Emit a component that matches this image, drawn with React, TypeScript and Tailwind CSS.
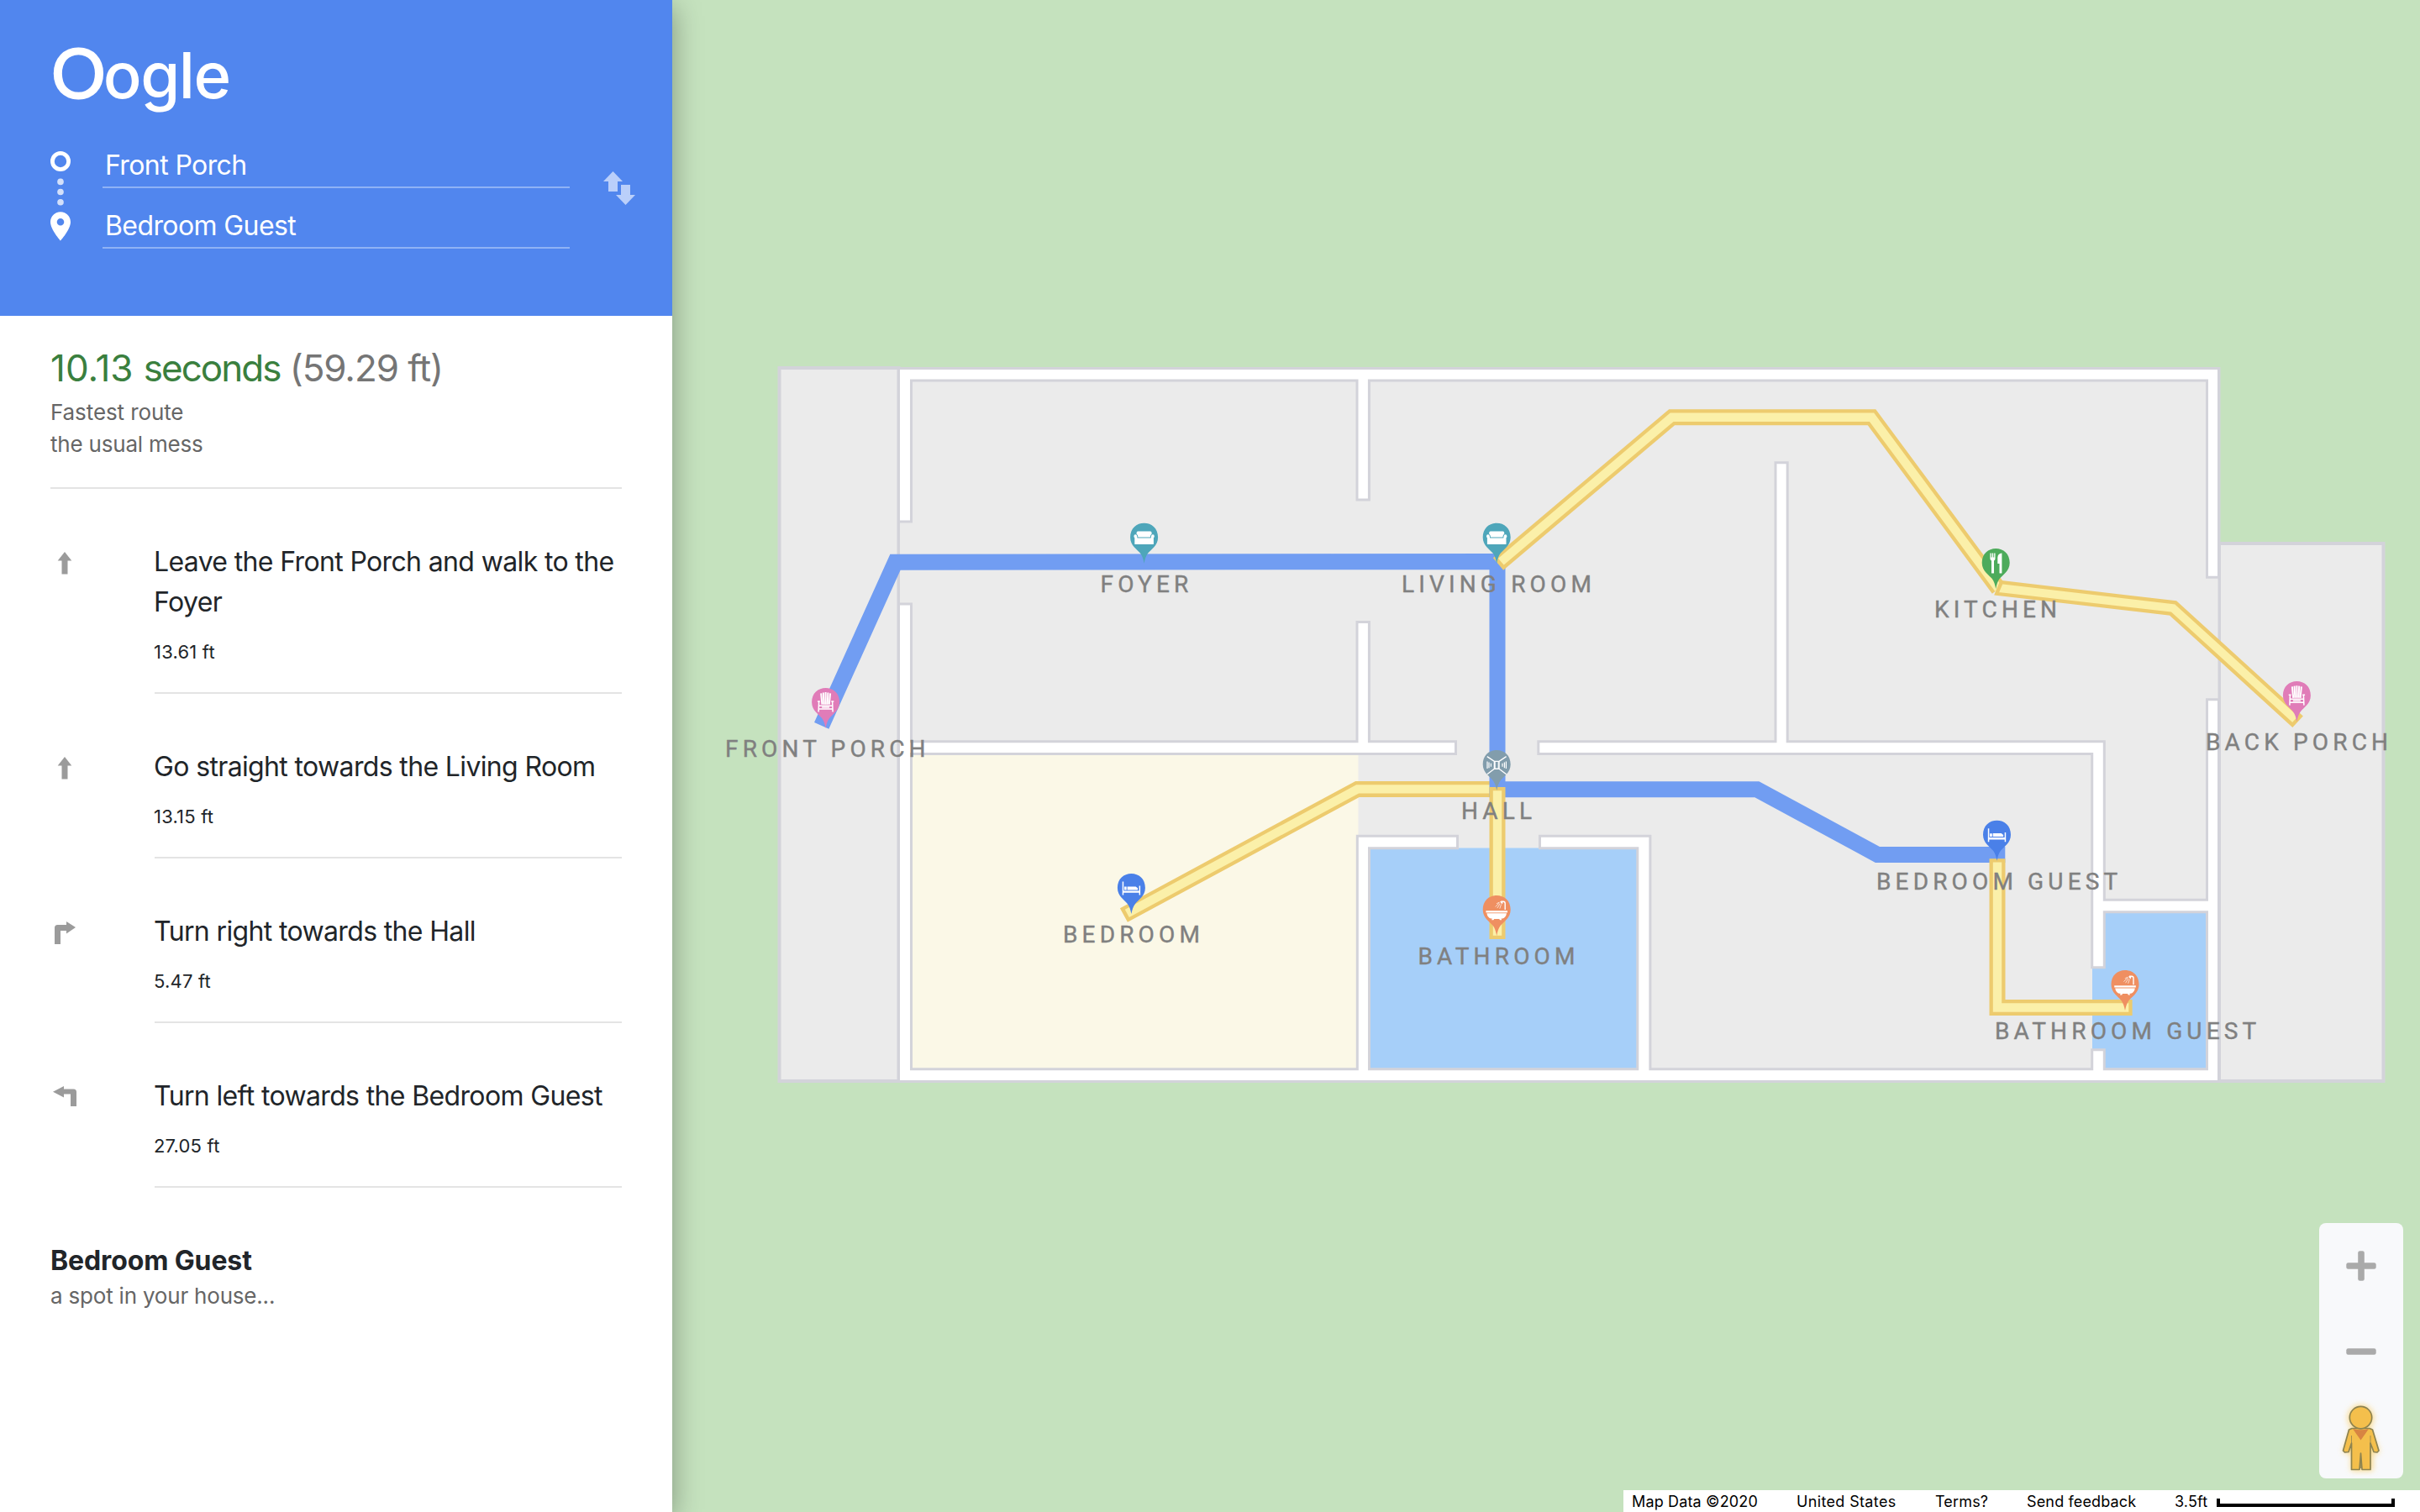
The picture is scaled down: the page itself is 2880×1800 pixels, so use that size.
import React from "react";

type Room = { name: string; x: number; y: number; kind: string; px: number; py: number };

const rooms: Room[] = [
  { name: "FRONT PORCH", x: 863, y: 901, kind: "chair", px: 982.6, py: 866.5 },
  { name: "FOYER", x: 1309.5, y: 704.7, kind: "sofa", px: 1361.6, py: 670.3 },
  { name: "LIVING ROOM", x: 1668, y: 704.7, kind: "sofa", px: 1781.2, py: 670.3 },
  { name: "KITCHEN", x: 2302, y: 734.7, kind: "food", px: 2375.2, py: 700.5 },
  { name: "BACK PORCH", x: 2625, y: 892.7, kind: "chair", px: 2733.4, py: 858.6 },
  { name: "HALL", x: 1739, y: 975, kind: "hall", px: 1781.2, py: 940.6 },
  { name: "BATHROOM", x: 1687.5, y: 1148, kind: "bath", px: 1781.2, py: 1113.5 },
  { name: "BEDROOM", x: 1265, y: 1122, kind: "bed", px: 1346.4, py: 1087.6 },
  { name: "BEDROOM GUEST", x: 2233, y: 1059, kind: "bed", px: 2376.5, py: 1024.3 },
  { name: "BATHROOM GUEST", x: 2374, y: 1237, kind: "bath", px: 2529, py: 1202.6 },
];

const pinColors: Record<string, string> = {
  chair: "#e07cb8",
  sofa: "#4ea6ba",
  food: "#4dab5b",
  hall: "#829dac",
  bath: "#ef8f61",
  bed: "#4a80e8",
};

/* Glyphs are drawn around the pin tip at (0, 0). */
const glyphs: Record<string, React.ReactNode> = {
  sofa: (
    <g fill="#fff">
      <path d="M-7.400 -37.800h14.800q1.600 0 1.600 1.800v1.500q-1.600.8-1.800 3.800h-14.400q-.2-3-1.800-3.800v-1.500q0-1.800 1.600-1.800z" />
      <path d="M-12.200 -31.800q0-2.200 1.800-2.200t2 2l.3 2.300h16.200l.3-2.300q.2-2 2-2t1.800 2.200q0 1.200-.9 1.800v7.100q0 .7-.7.700h-21.200q-.7 0-.7-.7v-7.100q-.9-.6-.9-1.800z" />
    </g>
  ),
  chair: (
    <g fill="none" stroke="#fff">
      <path strokeWidth="2" d="M-5.500 -41.200l1.300 13.400M-2.800 -42l.7 14.200M0 -42.400v14.600M2.800 -42l-.7 14.200M5.500 -41.200l-1.300 13.400" />
      <path strokeWidth="1.500" d="M-9.700 -31.400h3M6.700 -31.400h3M-8 -31.400l-.5 12.400M8 -31.400l.5 12.400M-8 -26.300h16M-4.500 -24.400h9M-8 -22.400h16" />
    </g>
  ),
  food: (
    <g fill="#fff">
      <path d="M-6.800 -41.900h1.300v5h1v-5h1.500v5h1v-5h1.300v6.400q0 1.600-1.500 2.500v14.600q0 .5-.5.500h-2q-.5 0-.5-.5v-14.600q-1.600-.9-1.600-2.500z" />
      <path d="M7.200 -42v23.500q0 .5-.5.500h-1.900q-.5 0-.5-.5v-11h-2.200v-7.300q.3-4.800 5.100-5.200z" />
    </g>
  ),
  hall: (
    <g fill="none" stroke="#fff" strokeWidth="1.400">
      <path d="M-11.400 -40l8.600 5.800v8.800l-8.600 6.600M11.400 -40l-8.600 5.800v8.800l8.600 6.600M-2.800 -34.200h5.600M-2.800 -25.400h5.600" />
      <path strokeWidth="1.200" d="M-11.200 -34v8.400M-9.200 -33.200v6.800M-6.800 -31.800v4M11.200 -34v8.400M9.200 -33.200v6.800M6.800 -31.800v4" />
      <path strokeWidth="1" d="M-2 -34v8.400M2 -34v8.400" />
    </g>
  ),
  bath: (
    <g fill="#fff">
      <path d="M-12.800 -29.300h25.600v2.200h-25.600z" />
      <path d="M-11.800 -26.200h23.600q-.8 5-4.800 6.300h-1.600l.6 1.700h-2.200l-.8-1.300h-6l-.8 1.300h-2.200l.6-1.700h-1.600q-4-1.300-4.800-6.300z" />
      <path fill="none" stroke="#fff" strokeWidth="1.400" d="M10 -30.400v-7.600q0-2.300-2-2.300h-3" />
      <path d="M3.600 -40.200h4l-1 3.200z" />
      <path fill="none" stroke="#fff" strokeWidth=".7" d="M3.400 -38.800l-5 4.800M4 -37.800l-3.400 5.400M5.400 -37l-1.800 5.200M3 -39.400l-3.200 1.800" />
    </g>
  ),
  bed: (
    <g fill="#fff">
      <path d="M-10.700 -38h1.500v16h-1.500zM9.200 -33.200h1.500v11.200h-1.500zM-9.200 -27.200h18.400v2.400h-18.400zM-8.400 -32h2.700v3.800h-2.700zM-4.800 -32.200h10l2.400 1.800v2.200h-12.400z" />
    </g>
  ),
};

function Pin({ room }: { room: Room }) {
  return (
    <g transform={`translate(${room.px} ${room.py})`}>
      <path
        fill={pinColors[room.kind]}
        d="M0 0.500C-1 -5-2.200 -8.500-4.600 -11.700C-8 -16-16.500 -20.500-16.500 -30.500C-16.500 -41.500-9 -47.600 0 -47.600S16.500 -41.500 16.500 -30.500C16.500 -20.500 8 -16 4.600 -11.700C2.200 -8.500 1 -5 0 .5z"
      />
      {glyphs[room.kind]}
    </g>
  );
}

function Path({ outer, inner }: { outer: string; inner: string }) {
  return (
    <g fill="none" strokeLinejoin="miter">
      <path d={outer} stroke="#edcb6e" strokeWidth="19" />
      <path d={inner} stroke="#fbf0a9" strokeWidth="10.4" />
    </g>
  );
}

function FloorPlan() {
  return (
    <svg className="absolute inset-0 h-full w-full" viewBox="800 0 2080 1800">
      <g fill="#ebebeb" stroke="#d3d3da">
        <rect x="927.5" y="438" width="142" height="849" strokeWidth="4" />
        <rect x="2641" y="647" width="195.500" height="640" strokeWidth="4" />
        <rect x="1069.5" y="438.5" width="1571.500" height="849" strokeWidth="3" />
      </g>
      <rect x="1084.500" y="897" width="532" height="376" fill="#fbf8e7" />
      <rect x="1629.500" y="1009.500" width="319.500" height="263.500" fill="#a6cff9" />
      <path d="M2504 1086h123v187h-123v-23h-14v-98h14z" fill="#a6cff9" />
      <g fill="#fff" stroke="#d3d3da" strokeWidth="3">
        <path d="M1069.500 621V438.500H2640.500V687.300H2626.500V453H1629.400V595H1615V453H1084.500V621z" />
        <path d="M1069.500 719H1084.500V882.800H1615V740.500H1629.400V882.800H1732.500V897.500H1084.500V1272.800H1615.300V995.300H1734.500V1009.700H1629.500V1272.800H1948.800V1009.700H1832.500V995.300H1963.900V1272.800H2489.700V1249.800H2504.300V1272.800H2626.500V1085.800H2504.300V1151.800H2489.700V897.500H1830.800V882.800H2113V550.700H2127.200V882.800H2504.300V1071.300H2626.500V832.700H2640.500V1287.500H1069.500z" />
      </g>

      <Path
        outer="M1337.400 1089.500L1615.500 939.400H1782"
        inner="M1341.300 1087.400L1615.500 939.400H1782"
      />
      <path
        d="M977.700 863.800L1065.500 669.200L1782 668.500V939.700L2091 939.800L2234.300 1017.400H2386.300"
        fill="none"
        stroke="#719df2"
        strokeWidth="19"
      />
      <Path
        outer="M1783 671.400L1989.700 496.700H2227.500L2378.500 701"
        inner="M1786.300 668.600L1989.700 496.700H2227.500L2378.500 701"
      />
      <path
        d="M2381.800 693.100L2589.200 717.300L2737.800 852.600L2728.200 862.900L2583 730.600L2376.200 706.800z"
        fill="#fbf0a9"
        stroke="#edcb6e"
        strokeWidth="4.300"
      />
      <Path outer="M1782 937V1118" inner="M1782 941.300V1113.700" />
      <Path
        outer="M2377 1022.300V1199.500H2537.600"
        inner="M2377 1026.600V1199.500H2533.300"
      />

      {rooms.map((r) => (
        <Pin key={r.name} room={r} />
      ))}
      {rooms.map((r) => (
        <text
          key={r.name}
          x={r.x}
          y={r.y}
          fill="#808080"
          stroke="#808080"
          strokeWidth="0.4"
          className="font-[Roboto,sans-serif] text-[28px] tracking-[5.15px]"
        >
          {r.name}
        </text>
      ))}
    </svg>
  );
}

function Pegman() {
  return (
    <svg className="mt-[43px] h-[88px] w-[60px] shrink-0 overflow-visible" viewBox="0 0 60 88">
      <defs>
        <filter id="glow" x="-50%" y="-50%" width="200%" height="200%">
          <feGaussianBlur stdDeviation="3.500" />
        </filter>
      </defs>
      <g fill="#fbd57a" opacity="0.85" filter="url(#glow)">
        <circle cx="29.500" cy="18" r="15.500" />
        <path d="M18 30h23l11 29-8 2v20h-26v-20l-10-2z" />
      </g>
      <g fill="#f4bf4c" stroke="#8d8350" strokeWidth="1.700" strokeLinejoin="round">
        <path d="M19 30.500L15.500 32L8.500 57L10.500 59L15 58.500L18.500 48V79.500H28L29.500 60L31 79.500H41V48L45 58.500L49 59L51 57L43.500 32L40 30.500z" />
        <path fill="none" strokeWidth="0.800" d="M18.500 39V50M41 39V50M29.500 60V78" />
        <circle cx="29.500" cy="17.600" r="13.200" />
      </g>
      <path d="M20 31q9.500 2.500 19 0L29.500 44.500z" fill="#d78442" />
    </svg>
  );
}

function Controls() {
  return (
    <div className="absolute right-5 bottom-10 flex h-[304px] w-[100px] flex-col items-center rounded-lg bg-[#f8f9fb]">
      <svg className="mt-[33px] h-9 w-9 shrink-0" viewBox="0 0 36 36" fill="#aaaaaa">
        <rect x="0.300" y="14.200" width="35.400" height="7.600" rx="2.300" />
        <rect x="14.200" y="0.300" width="7.600" height="35.400" rx="2.300" />
      </svg>
      <svg className="mt-[66px] h-9 w-9 shrink-0" viewBox="0 0 36 36" fill="#aaaaaa">
        <rect x="0.300" y="14.200" width="35.400" height="7.600" rx="2.300" />
      </svg>
      <Pegman />
    </div>
  );
}

function Footer() {
  return (
    <footer className="absolute right-0 bottom-0 flex h-[26px] w-[948px] items-center bg-white pl-[10px] text-[18px] leading-[26px] tracking-[0.15px] text-black">
      <span className="w-[196px] pt-px">Map Data ©2020</span>
      <span className="w-[165px] pt-px tracking-[0.350px]">United States</span>
      <span className="w-[109px] pt-px">Terms?</span>
      <span className="w-[176px] pt-px">Send feedback</span>
      <span className="w-[50px] pt-px">3.5ft</span>
      <span className="mt-[4px] h-[10px] w-[212px] border-4 border-t-0 border-black" />
    </footer>
  );
}

function Endpoint({ children }: { children: string }) {
  return (
    <div className="h-[72px] border-b-2 border-[#8fb2f5] pt-[21px] pl-[3px] text-[32px] leading-[48px] tracking-[-0.6px]">
      {children}
    </div>
  );
}

function Header() {
  return (
    <header className="h-[376px] bg-[#5186ee] text-white">
      <div className="flex h-[152px] items-baseline pt-[38px] pl-[61px] leading-[96px]">
        <span className="font-[Lato,sans-serif] text-[81px] [-webkit-text-stroke:2px_white]">O</span>
        <span className="-ml-[3px] text-[76px] font-medium tracking-[-1.500px]">ogle</span>
      </div>
      <div className="flex">
        <svg className="mt-[26px] ml-[58px] h-[112px] w-[28px]" viewBox="58 178 28 112">
          <circle cx="72" cy="192" r="9.600" fill="none" stroke="#fff" strokeWidth="4.800" />
          <g fill="#fff" opacity="0.750">
            <circle cx="72" cy="216.400" r="3.800" />
            <circle cx="72" cy="228.500" r="3.800" />
            <circle cx="72" cy="240.700" r="3.800" />
          </g>
          <path
            fill="#fff"
            transform="translate(51.430 248.800) scale(1.714)"
            d="M12 2C8.130 2 5 5.130 5 9c0 5.250 7 13 7 13s7-7.750 7-13c0-3.870-3.130-7-7-7zm0 9.500a2.500 2.500 0 0 1 0-5 2.500 2.500 0 0 1 0 5z"
          />
        </svg>
        <div className="ml-[36px] w-[556px]">
          <Endpoint>Front Porch</Endpoint>
          <Endpoint>Bedroom Guest</Endpoint>
        </div>
        <svg className="mt-[52px] ml-[40px] h-[40px] w-[38px]" viewBox="718 204 38 40" fill="#bacffa">
          <path d="M729.500 204L741 216H735V228H724V216H718z" />
          <path d="M744.500 244L733 232H739V220H750V232H756z" />
        </svg>
      </div>
    </header>
  );
}

const arrows: Record<string, React.ReactNode> = {
  up: <path d="M17 0L25.300 10.500H20.500V26.500H13.500V10.500H8.700z" />,
  right: <path d="M5 27V7.500Q5 4 8.500 4H19V0L30 7L19 14.500V11H12V27z" />,
  left: <path d="M31 24V7Q31 3.500 27.500 3.500H16V0L3 6.700L16 13.500V9.500H24V24z" />,
};

const steps = [
  { icon: "up", text: "Leave the Front Porch and walk to the Foyer", dist: "13.61 ft" },
  { icon: "up", text: "Go straight towards the Living Room", dist: "13.15 ft" },
  { icon: "right", text: "Turn right towards the Hall", dist: "5.47 ft" },
  { icon: "left", text: "Turn left towards the Bedroom Guest", dist: "27.05 ft" },
];

function Sidebar() {
  return (
    <aside className="relative z-10 h-full w-[800px] shrink-0 bg-white text-[#212529] shadow-[0_8px_32px_rgba(0,0,0,0.35)]">
      <Header />
      <section className="mx-[60px] h-[206px] border-b-2 border-[#e4e4e4] pt-[29px]">
        <h1 className="text-[44px] leading-[66px] tracking-[-1.100px] text-[#757575]">
          <span className="text-[#3a7f3e]">
            <span className="tracking-[0px]">10.13 </span>
            <span className="tracking-[-2px]">seconds</span>
          </span>{" "}
          (59.29 ft)
        </h1>
        <p className="pt-px text-[26px] leading-[38px] tracking-[-0.100px] text-[#666666]">Fastest route</p>
        <p className="text-[26px] leading-[38px] tracking-[-0.200px] text-[#666666]">the usual mess</p>
      </section>
      <ol className="mx-[60px]">
        {steps.map((s) => (
          <li key={s.text} className="flex">
            <svg className="mt-[75px] h-8 w-[34px]" viewBox="0 0 34 32" fill="#9b9b9b">
              {arrows[s.icon]}
            </svg>
            <div className="ml-[90px] flex-1 border-b-2 border-[#e4e4e4] pt-[63px] pb-[31px]">
              <p className="-mr-2 -ml-px text-[32px] leading-[48px] tracking-[-0.640px]">{s.text}</p>
              <p className="mt-[19px] -ml-px text-[22px] leading-[33px] tracking-[0.200px]">{s.dist}</p>
            </div>
          </li>
        ))}
      </ol>
      <section className="mx-[60px] pt-[63px]">
        <h2 className="text-[32px] leading-[48px] font-bold tracking-[-0.120px]">Bedroom Guest</h2>
        <p className="-mt-[2px] text-[26px] leading-[39px] tracking-[-0.200px] text-[#666666]">
          a spot in your house...
        </p>
      </section>
    </aside>
  );
}

export default function App() {
  return (
    <div className="flex h-[1800px] w-[2880px] overflow-hidden font-[Inter,sans-serif]">
      <Sidebar />
      <main className="relative flex-1 bg-[#c5e2be]">
        <FloorPlan />
        <Controls />
        <Footer />
      </main>
    </div>
  );
}
